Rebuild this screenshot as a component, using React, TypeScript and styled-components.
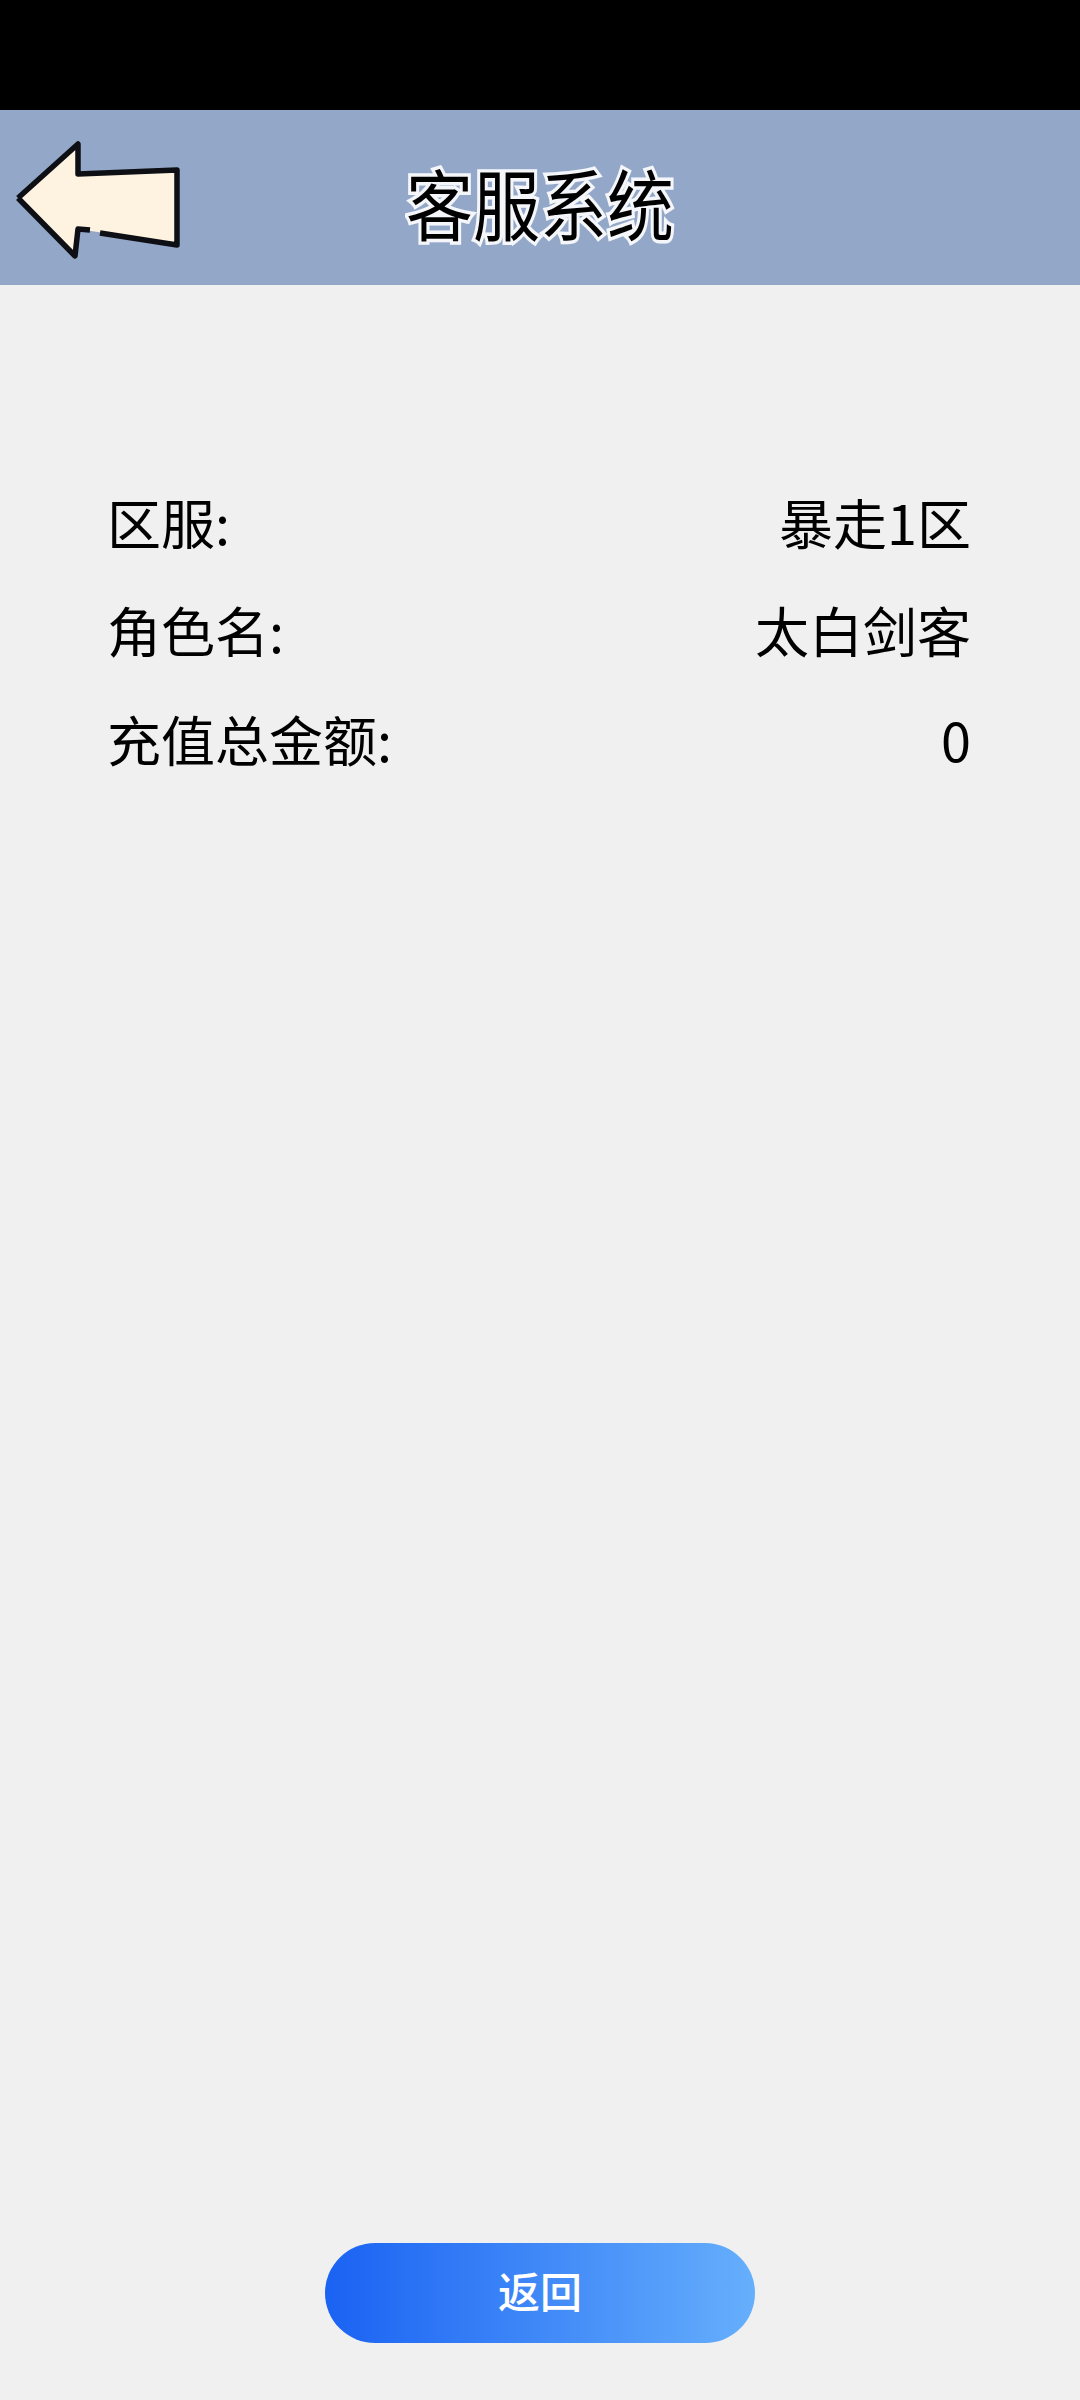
import styled, { createGlobalStyle } from "styled-components";

const GlobalStyle = createGlobalStyle`
  html, body {
    margin: 0;
    padding: 0;
    background: #f0f0f0;
  }
  * {
    box-sizing: border-box;
  }
`;

const rows = [
  { label: "区服:", value: "暴走1区" },
  { label: "角色名:", value: "太白剑客" },
  { label: "充值总金额:", value: "0" },
];

const BackArrow = () => (
  <ArrowSvg viewBox="0 0 172 126" aria-hidden="true">
    <path d="M6 60 L66 6 L66 36 L165 32 L165 106 L66 91 L63 118 Z" fill="#fdf3e0" />
    <path
      d="M6 60 L66 6 L66 36 L165 32 L165 107 L88 95 M78 92 L66 91 L63 118 L6 60"
      fill="none"
      stroke="#0d0f14"
      strokeWidth="5.5"
      strokeLinejoin="round"
    />
  </ArrowSvg>
);

const App = () => {
  return (
    <Page>
      <GlobalStyle />
      <StatusBar />
      <Header>
        <BackButton>
          <BackArrow />
        </BackButton>
        <Title>客服系统</Title>
      </Header>
      <InfoList>
        {rows.map((row) => (
          <InfoRow key={row.label}>
            <span>{row.label}</span>
            <span>{row.value}</span>
          </InfoRow>
        ))}
      </InfoList>
      <Footer>
        <ReturnBtn>返回</ReturnBtn>
      </Footer>
    </Page>
  );
};
export default App;

const Page = styled.div`
  display: flex;
  flex-direction: column;
  width: 1080px;
  height: 2400px;
  background: #f0f0f0;
  font-family: "Noto Sans CJK SC", "Noto Sans", sans-serif;
`;
const StatusBar = styled.div`
  height: 110px;
  background: #000;
`;
const Header = styled.header`
  display: grid;
  grid-template-columns: 1fr auto 1fr;
  align-items: center;
  height: 175px;
  background: #93a8c8;
`;
const BackButton = styled.div`
  display: flex;
  padding: 7px 0 0 12px;
`;
const ArrowSvg = styled.svg`
  display: block;
  width: 172px;
  height: 126px;
`;
const Title = styled.h1`
  margin: 0;
  padding-top: 6px;
  font-size: 67px;
  font-weight: 400;
  line-height: 80px;
  color: #000;
  -webkit-text-stroke: 6px #f4f6fa;
  paint-order: stroke fill;
  transform: scaleY(1.15);
`;
const InfoList = styled.div`
  display: flex;
  flex-direction: column;
  padding: 182px 109px 0 107px;
`;
const InfoRow = styled.div`
  display: flex;
  justify-content: space-between;
  align-items: center;
  height: 108.5px;
  font-size: 54px;
  color: #000;
`;
const Footer = styled.div`
  display: flex;
  justify-content: center;
  margin-top: auto;
  padding-bottom: 57px;
`;
const ReturnBtn = styled.button`
  width: 430px;
  height: 100px;
  padding: 0 0 7px;
  border: none;
  border-radius: 50px;
  background: linear-gradient(90deg, #1a62f3 0%, #66affc 100%);
  color: #fff;
  font-family: inherit;
  font-size: 42px;
  font-weight: 500;
`;
